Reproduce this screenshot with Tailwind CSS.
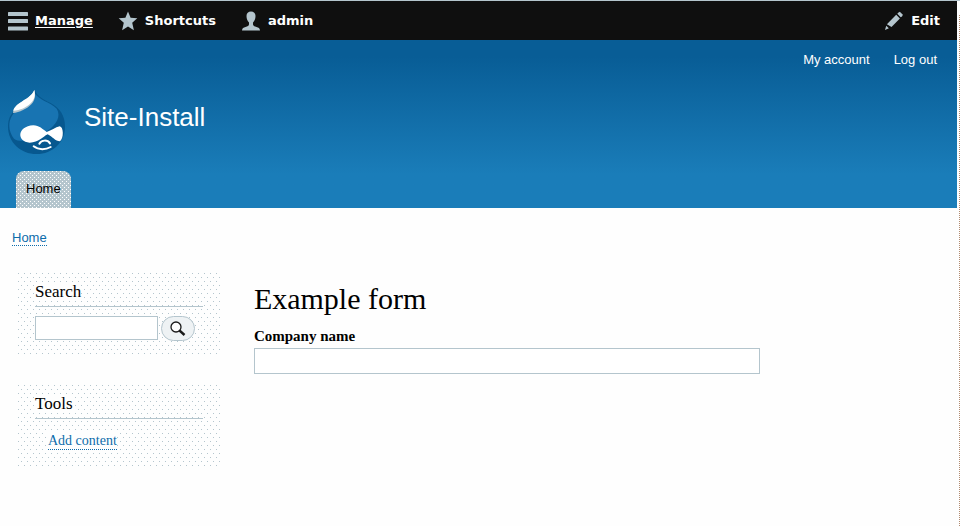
<!DOCTYPE html>
<html lang="en">
<head>
<meta charset="utf-8">
<meta name="viewport" content="width=device-width, initial-scale=1">
<title>Example form | Site-Install</title>
<script src="https://cdn.jsdelivr.net/npm/@tailwindcss/browser@4"></script>
</head>
<body class="min-h-screen bg-[#fefefe] border-t border-[#b4c5cd] flex font-['Liberation_Sans',Arial,sans-serif] text-black">
<div class="flex-1 min-w-0">
  <nav aria-label="Toolbar" class="h-[39px] bg-[#0f0f0f] flex items-center pl-2 pr-[17px] gap-[25px] font-['DejaVu_Sans',Verdana,sans-serif] font-bold text-[13px] leading-4 text-white">
    <a href="#" class="flex items-center gap-[7px] underline underline-offset-2">
      <svg class="w-5 h-5" viewBox="0 0 20 20" fill="#b4c5cd" aria-hidden="true"><rect y="1" width="20" height="4" rx=".6"/><rect y="8" width="20" height="4" rx=".6"/><rect y="15.500" width="20" height="4" rx=".6"/></svg>
      Manage</a>
    <a href="#" class="flex items-center gap-[7px]">
      <svg class="w-5 h-5" viewBox="0 0 20 20" fill="#b4c5cd" aria-hidden="true"><path d="M10 .5 12.600 6.800 19.300 7.300 14.200 11.700 15.900 19.200 10 15.600 4.100 19.200 5.800 11.700.7 7.300 7.400 6.800Z"/></svg>
      Shortcuts</a>
    <a href="#" class="flex items-center gap-[7px]">
      <svg class="w-5 h-5" viewBox="0 0 20 20" fill="#b4c5cd" aria-hidden="true"><path d="M10 .5C7.300.5 5.500 2.200 5.500 5c0 2.900 1 5 2.500 6.500v1.800c0 1.500-1.500 2.200-3.500 2.800-2 .5-3.300 1.300-3.500 3.400h18c-.2-2.100-1.500-2.900-3.500-3.400-2-.6-3.500-1.300-3.500-2.800v-1.800c1.500-1.500 2.500-3.600 2.500-6.500C14.500 2.200 12.700.5 10 .5Z"/></svg>
      admin</a>
    <button type="button" class="ml-auto flex items-center gap-[7px]">
      <svg class="w-5 h-5" viewBox="0 0 20 20" fill="#b4c5cd" aria-hidden="true"><path d="M14.200 1.700 15.800.7 18.900 3.800 18 5.400 16.700 6.200 13.300 2.800ZM12.200 3.700 15.900 7.400 7.500 16 2.900 13.300ZM2.200 14.800 4.900 17.200 1 18.900Z"/></svg>
      Edit</button>
  </nav>
  <header class="bg-linear-to-b from-[#085d96] from-10% to-[#1a7db9] to-80% text-white">
    <nav aria-label="User account" class="flex justify-end gap-6 pt-3 pr-5 text-[13px] leading-4">
      <a href="#">My account</a><a href="#">Log out</a>
    </nav>
    <div class="flex items-start gap-4 pl-2 pt-[22px]">
      <a href="#" aria-label="Home">
        <svg class="w-[60px] h-[65px]" viewBox="12 12 180 195" aria-hidden="true">
          <path d="M92 12C90 38 60 48 42 64C22 80 12 96 12 122C12 168 50 204 98 204C146 204 183 168 183 122C183 88 167 68 146 55C126 43 100 34 92 12Z" fill="#07588f"/>
          <path d="M92 22C88 42 62 52 45 67C26 82 16 98 16 120C16 134 22 148 30 158C50 174 110 158 130 134C158 116 172 90 158 68C140 50 104 42 92 22Z" fill="#1874b2"/>
          <path d="M91 12C84 30 66 38 46 52C34 60 27 70 27 81C46 80 70 68 82 55C94 42 95 28 91 12Z" fill="#b4c5cd"/>
          <path d="M91 12C84 30 66 38 46 52C36 59 29 67 28 74C48 74 68 64 80 52C93 39 94 26 91 12Z" fill="#fff"/>
          <path d="M88 118C106 118 116 130 128 138C142 134 154 124 167 121C179 122 180 158 168 166C154 166 145 152 131 145C115 153 105 169 77 170C38 168 38 121 88 118Z" fill="#fff"/>
          <path d="M106 173C112 162 130 160 138 172M89 181C104 193 126 191 140 183" fill="none" stroke="#fff" stroke-width="6" stroke-linecap="round"/>
        </svg>
      </a>
      <a href="#" class="pt-3 text-[26px] leading-[30px]">Site-Install</a>
    </div>
    <nav aria-label="Main navigation" class="pl-4 pt-4 flex">
      <a href="#" class="h-[37px] px-[10px] rounded-t-lg bg-[#b4c5cd] bg-[conic-gradient(at_1px_1px,transparent_75%,#fff_0),conic-gradient(at_1px_1px,transparent_75%,#fff_0)] bg-[length:4px_4px] bg-[position:0_0,2px_2px] text-black text-[13px] leading-9">Home</a>
    </nav>
  </header>
  <nav aria-label="Breadcrumb" class="pl-3 pt-[22px] flex text-[13px] leading-[15px] text-[#0d6cab]">
    <a href="#" class="border-b border-dotted border-[#0d6cab]">Home</a>
  </nav>
  <div class="flex pl-[18px] pt-[27px] gap-[34px] font-['Liberation_Serif',Georgia,serif]">
    <aside class="w-[21.5%] flex flex-col gap-7">
      <section class="bg-[conic-gradient(at_1px_1px,transparent_75%,#b4c5cd_0),conic-gradient(at_1px_1px,transparent_75%,#b4c5cd_0)] bg-[length:6px_8px] bg-[position:0_0,3px_4px] px-[17px] pt-[9px] pb-4">
        <h2 class="text-[17px] leading-5 pb-1 border-b border-[#b4c5cd]"><span class="bg-[#fefefe]">Search</span></h2>
        <form class="flex gap-[3px] pt-[9px]">
          <input type="search" aria-label="Search" class="w-[123px] h-6 bg-white border border-[#b4c5cd] px-1">
          <button type="button" aria-label="Search" class="w-[34px] h-[25px] rounded-full border border-[#b4c5cd] bg-[#eef2f4] flex items-center justify-center">
            <svg class="w-4 h-4" viewBox="0 0 16 16" fill="none" stroke="#1a1a1a" aria-hidden="true"><circle cx="6" cy="6" r="5" fill="#fefefe" stroke-width="1.300"/><path d="M9.500 9.500 14.500 14" stroke-width="2.400"/></svg>
          </button>
        </form>
      </section>
      <section class="bg-[conic-gradient(at_1px_1px,transparent_75%,#b4c5cd_0),conic-gradient(at_1px_1px,transparent_75%,#b4c5cd_0)] bg-[length:6px_8px] bg-[position:0_0,3px_4px] px-[17px] pt-[9px] pb-4">
        <h2 class="text-[17px] leading-5 pb-1 border-b border-[#b4c5cd]"><span class="bg-[#fefefe]">Tools</span></h2>
        <ul class="flex pt-[14px] pl-[13px] text-sm leading-4"><li><a href="#" class="block bg-[#fefefe] text-[#0d6cab] border-b border-dotted border-[#0d6cab]">Add content</a></li></ul>
      </section>
    </aside>
    <main class="flex-1 pt-2">
      <h1 class="text-[30px] leading-9">Example form</h1>
      <form class="pt-[10px]">
        <label for="company" class="block font-bold text-[15px] leading-[18px]">Company name</label>
        <input id="company" type="text" class="mt-[3px] w-[72%] h-[26px] bg-white border border-[#b4c5cd] px-2">
      </form>
    </main>
  </div>
</div>
<div class="w-[3px] border-r border-dotted border-[#b08a70] mt-[14px]"></div>
</body>
</html>
